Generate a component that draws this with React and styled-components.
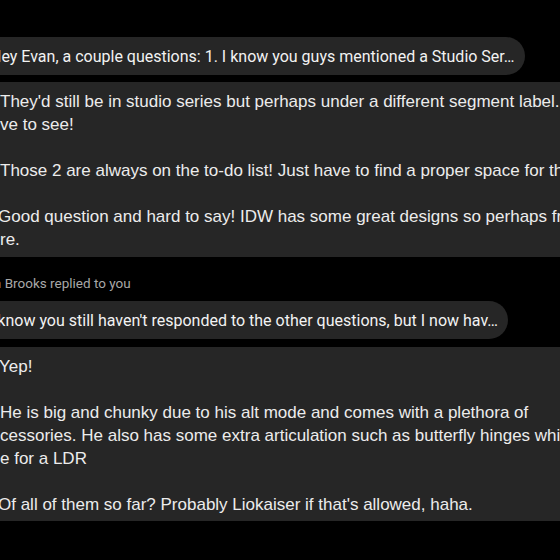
import React from "react";
import styled, { createGlobalStyle } from "styled-components";

const Global = createGlobalStyle`
  html, body {
    margin: 0;
    padding: 0;
    background: #000;
    width: 560px;
    height: 560px;
    overflow: hidden;
  }
  #root { width: 560px; height: 560px; overflow: hidden; }
`;

const Thread = styled.div`
  display: flex;
  flex-direction: column;
  align-items: flex-start;
  padding-top: 37px;
  width: 560px;
  font-family: "Liberation Sans", Arial, sans-serif;
`;

const ReplyQuote = styled.div`
  box-sizing: border-box;
  height: 38px;
  display: flex;
  align-items: center;
  margin-left: -40px;
  padding: 0 10px 0 40px;
  border-radius: 0 19px 19px 0;
  background: #262626;
  color: #f2f2f2;
  font-family: Roboto, "Liberation Sans", sans-serif;
  font-size: 16px;
  white-space: nowrap;
  overflow: hidden;
  margin-top: ${(p) => p.$top || 0}px;
`;

const QuoteText = styled.span`
  margin-left: ${(p) => p.$shift}px;
`;

const Bubble = styled.div`
  box-sizing: border-box;
  margin-left: -40px;
  width: 700px;
  margin-top: ${(p) => p.$top}px;
  padding: 8px 0 ${(p) => p.$bottom}px 40px;
  background: #262626;
  color: #ececec;
  font-size: 17px;
  line-height: 23px;
`;

const Line = styled.div`
  height: 23px;
  white-space: nowrap;
  margin-left: ${(p) => p.$shift || 0}px;
`;

const Label = styled.div`
  margin-top: 18px;
  height: 16px;
  line-height: 16px;
  font-family: Roboto, "Liberation Sans", sans-serif;
  font-size: 13.5px;
  color: #a8a8a8;
  white-space: nowrap;
  margin-left: ${(p) => p.$shift}px;
`;

export default function App() {
  return (
    <>
      <Global />
      <Thread>
        <ReplyQuote>
          <QuoteText $shift={-10}>
            Hey Evan, a couple questions: 1. I know you guys mentioned a Studio Ser…
          </QuoteText>
        </ReplyQuote>
        <Bubble $top={7} $bottom={6}>
          <Line>They'd still be in studio series but perhaps under a different segment label. It's one we'd</Line>
          <Line>ve to see!</Line>
          <Line />
          <Line>Those 2 are always on the to-do list! Just have to find a proper space for them.</Line>
          <Line />
          <Line $shift={-2}>Good question and hard to say! IDW has some great designs so perhaps from the</Line>
          <Line>re.</Line>
        </Bubble>
        <Label $shift={-33}>Ethan Brooks replied to you</Label>
        <ReplyQuote $top={10}>
          <QuoteText $shift={-11}>
            I know you still haven't responded to the other questions, but I now hav…
          </QuoteText>
        </ReplyQuote>
        <Bubble $top={8} $bottom={5}>
          <Line $shift={-1}>Yep!</Line>
          <Line />
          <Line>He is big and chunky due to his alt mode and comes with a plethora of</Line>
          <Line>cessories. He also has some extra articulation such as butterfly hinges which is</Line>
          <Line>e for a LDR</Line>
          <Line />
          <Line $shift={-2}>Of all of them so far? Probably Liokaiser if that's allowed, haha.</Line>
        </Bubble>
      </Thread>
    </>
  );
}
